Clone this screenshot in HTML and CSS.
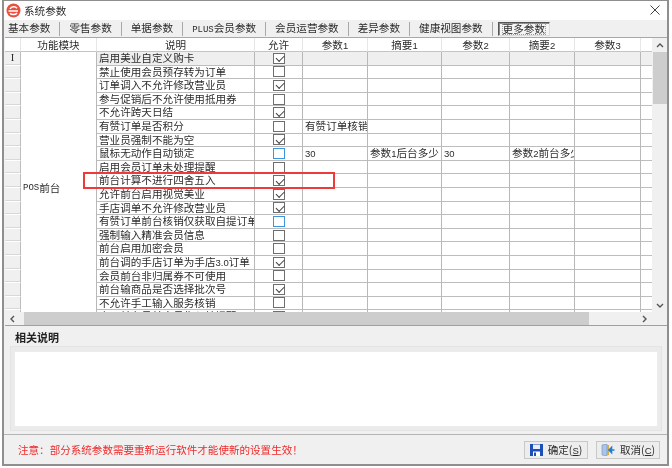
FILE: index.html
```html
<!DOCTYPE html>
<html lang="zh-CN">
<head>
<meta charset="utf-8">
<title>系统参数</title>
<link rel="stylesheet" href="styles.css">
</head>
<body>
<div class="window">
  <header class="titlebar">
    <svg class="app-icon" width="15" height="15" viewBox="0 0 15 15"><circle cx="7.5" cy="7.5" r="7" fill="#e8503f"/><path d="M2.5 8h9.5M11 5.2C9.3 3.2 5.4 3.3 4 5.8M4 10.2C5.5 12.2 9.5 12 11 10" fill="none" stroke="#fff" stroke-width="1.5"/></svg>
    <span class="title">系统参数</span>
    <svg class="close" width="10" height="10" viewBox="0 0 10 10"><path d="M.5.5l9 9M9.5.5l-9 9" stroke="#444" stroke-width="1" fill="none"/></svg>
  </header>
  <nav class="tabs">
    <span class="tab">基本参数</span>
    <span class="tab">零售参数</span>
    <span class="tab">单据参数</span>
    <span class="tab"><span class="n">PLUS</span>会员参数</span>
    <span class="tab">会员运营参数</span>
    <span class="tab">差异参数</span>
    <span class="tab">健康视图参数</span>
    <span class="tab active"><span class="focus">更多参数</span></span>
  </nav>
  <section class="grid-wrap">
    <div class="grid-main">
      <div class="grid">
        <div class="h"></div><div class="h">功能模块</div><div class="h">说明</div><div class="h">允许</div><div class="h">参数<span class="d">1</span></div><div class="h">摘要<span class="d">1</span></div><div class="h">参数<span class="d">2</span></div><div class="h">摘要<span class="d">2</span></div><div class="h">参数<span class="d">3</span></div><div class="h"></div>

        <div class="rh cur">I</div><div class="module"><span class="n">POS</span>前台</div><div class="c sel">启用美业自定义购卡</div><div class="c sel mid"><i class="cb on"></i></div><div class="c sel"></div><div class="c sel"></div><div class="c sel"></div><div class="c sel"></div><div class="c sel"></div><div class="c sel"></div>
        <div class="rh"></div><div class="c">禁止使用会员预存转为订单</div><div class="c mid"><i class="cb"></i></div><div class="c"></div><div class="c"></div><div class="c"></div><div class="c"></div><div class="c"></div><div class="c"></div>
        <div class="rh"></div><div class="c">订单调入不允许修改营业员</div><div class="c mid"><i class="cb on"></i></div><div class="c"></div><div class="c"></div><div class="c"></div><div class="c"></div><div class="c"></div><div class="c"></div>
        <div class="rh"></div><div class="c">参与促销后不允许使用抵用券</div><div class="c mid"><i class="cb"></i></div><div class="c"></div><div class="c"></div><div class="c"></div><div class="c"></div><div class="c"></div><div class="c"></div>
        <div class="rh"></div><div class="c">不允许跨天日结</div><div class="c mid"><i class="cb on"></i></div><div class="c"></div><div class="c"></div><div class="c"></div><div class="c"></div><div class="c"></div><div class="c"></div>
        <div class="rh"></div><div class="c">有赞订单是否积分</div><div class="c mid"><i class="cb"></i></div><div class="c clip">有赞订单核销</div><div class="c"></div><div class="c"></div><div class="c"></div><div class="c"></div><div class="c"></div>
        <div class="rh"></div><div class="c">营业员强制不能为空</div><div class="c mid"><i class="cb on"></i></div><div class="c"></div><div class="c"></div><div class="c"></div><div class="c"></div><div class="c"></div><div class="c"></div>
        <div class="rh"></div><div class="c">鼠标无动作自动锁定</div><div class="c mid"><i class="cb blue"></i></div><div class="c"><span class="d">30</span></div><div class="c clip">参数<span class="d">1</span>后台多少</div><div class="c"><span class="d">30</span></div><div class="c clip">参数<span class="d">2</span>前台多少</div><div class="c"></div><div class="c"></div>
        <div class="rh"></div><div class="c">启用会员订单未处理提醒</div><div class="c mid"><i class="cb"></i></div><div class="c"></div><div class="c"></div><div class="c"></div><div class="c"></div><div class="c"></div><div class="c"></div>
        <div class="rh"></div><div class="c">前台计算不进行四舍五入</div><div class="c mid"><i class="cb on"></i></div><div class="c"></div><div class="c"></div><div class="c"></div><div class="c"></div><div class="c"></div><div class="c"></div>
        <div class="rh"></div><div class="c">允许前台启用视觉美业</div><div class="c mid"><i class="cb on"></i></div><div class="c"></div><div class="c"></div><div class="c"></div><div class="c"></div><div class="c"></div><div class="c"></div>
        <div class="rh"></div><div class="c">手店调单不允许修改营业员</div><div class="c mid"><i class="cb on"></i></div><div class="c"></div><div class="c"></div><div class="c"></div><div class="c"></div><div class="c"></div><div class="c"></div>
        <div class="rh"></div><div class="c clip">有赞订单前台核销仅获取自提订单</div><div class="c mid"><i class="cb blue"></i></div><div class="c"></div><div class="c"></div><div class="c"></div><div class="c"></div><div class="c"></div><div class="c"></div>
        <div class="rh"></div><div class="c">强制输入精准会员信息</div><div class="c mid"><i class="cb"></i></div><div class="c"></div><div class="c"></div><div class="c"></div><div class="c"></div><div class="c"></div><div class="c"></div>
        <div class="rh"></div><div class="c">前台启用加密会员</div><div class="c mid"><i class="cb"></i></div><div class="c"></div><div class="c"></div><div class="c"></div><div class="c"></div><div class="c"></div><div class="c"></div>
        <div class="rh"></div><div class="c">前台调的手店订单为手店<span class="d">3.0</span>订单</div><div class="c mid"><i class="cb on"></i></div><div class="c"></div><div class="c"></div><div class="c"></div><div class="c"></div><div class="c"></div><div class="c"></div>
        <div class="rh"></div><div class="c">会员前台非归属券不可使用</div><div class="c mid"><i class="cb"></i></div><div class="c"></div><div class="c"></div><div class="c"></div><div class="c"></div><div class="c"></div><div class="c"></div>
        <div class="rh"></div><div class="c">前台输商品是否选择批次号</div><div class="c mid"><i class="cb on"></i></div><div class="c"></div><div class="c"></div><div class="c"></div><div class="c"></div><div class="c"></div><div class="c"></div>
        <div class="rh"></div><div class="c">不允许手工输入服务核销</div><div class="c mid"><i class="cb"></i></div><div class="c"></div><div class="c"></div><div class="c"></div><div class="c"></div><div class="c"></div><div class="c"></div>
        <div class="rh"></div><div class="c">启用前台员关会员生入结提醒</div><div class="c mid"><i class="cb"></i></div><div class="c"></div><div class="c"></div><div class="c"></div><div class="c"></div><div class="c"></div><div class="c"></div>
      </div>
      <div class="vscroll">
        <svg class="arrow" width="8" height="5" viewBox="0 0 8 5"><path d="M1 4l3-3 3 3" fill="none" stroke="#555" stroke-width="1.4"/></svg>
        <div class="vthumb"></div>
        <svg class="arrow down" width="8" height="5" viewBox="0 0 8 5"><path d="M1 1l3 3 3-3" fill="none" stroke="#555" stroke-width="1.4"/></svg>
      </div>
    </div>
    <div class="hscroll">
      <svg class="arrow" width="5" height="8" viewBox="0 0 5 8"><path d="M4 1L1 4l3 3" fill="none" stroke="#555" stroke-width="1.4"/></svg>
      <div class="hthumb"></div>
      <svg class="arrow" width="5" height="8" viewBox="0 0 5 8"><path d="M1 1l3 3-3 3" fill="none" stroke="#555" stroke-width="1.4"/></svg>
    </div>
    <div class="marker"></div>
  </section>
  <section class="notes">
    <h2 class="notes-title">相关说明</h2>
    <div class="notes-box"></div>
  </section>
  <footer class="footer">
    <p class="warn">注意：部分系统参数需要重新运行软件才能使新的设置生效！</p>
    <button class="btn" type="button">
      <svg width="13" height="12" viewBox="0 0 13 12"><rect width="13" height="12" fill="#1c4fb8"/><rect x="3" y="0.5" width="7" height="4.5" fill="#e8eefa"/><rect x="3" y="7.5" width="7" height="4.5" fill="#fff"/><rect x="4" y="8.5" width="2" height="3.5" fill="#1c4fb8"/></svg>
      <span>确定(<u class="d">S</u>)</span>
    </button>
    <button class="btn" type="button">
      <svg width="14" height="12" viewBox="0 0 14 12"><path d="M1 1l5-1v12l-5-1z" fill="#a9c6ea" stroke="#6f8fb8" stroke-width=".6"/><path d="M6 1h2v10H6z" fill="#e0a93f"/><path d="M13.5 6H10M10.5 3.5L8 6l2.5 2.5z" fill="#1f7fd6" stroke="#1f7fd6" stroke-width="1.6"/></svg>
      <span>取消(<u class="d">C</u>)</span>
    </button>
  </footer>
</div>
</body>
</html>
```
FILE: styles.css
```css
* { box-sizing: border-box; }
html, body { margin: 0; padding: 0; }
body {
  width: 672px;
  height: 468px;
  background: #fff;
  overflow: hidden;
  padding: 0 3px 2px 2px;
  font-family: "Noto Sans CJK SC", "Liberation Sans", sans-serif;
  font-size: 10.6px;
  color: #2c2c2c;
}
.n { font-family: "Liberation Mono", monospace; font-size: 9px; }
.d { font-family: "Liberation Sans", sans-serif; font-size: 9.5px; }
.window {
  height: 466px;
  display: flex;
  flex-direction: column;
  background: #f0f0f0;
  border: 1.5px solid #8f8f8f;
  border-width: 1px 2px 2px 2px;
  position: relative;
  filter: blur(0.3px);
}
.titlebar {
  height: 19px;
  flex: none;
  background: #fff;
  display: flex;
  align-items: center;
  padding: 0 7px 1px 2px;
}
.title { margin-left: 3px; flex: 1; }
.tabs {
  height: 17px;
  flex: none;
  display: flex;
  align-items: center;
  background: #f0f0f0;
}
.tab {
  height: 14px;
  line-height: 12px;
  padding: 0 9px;
  border-right: 1px solid #a8a8a8;
  white-space: nowrap;
}
.tab:first-child { padding-left: 4px; }
.tab.active {
  border: 1px solid;
  border-color: #555 #ddd #ddd #555;
  background: #f4f4f4;
  margin-left: 5px;
  padding: 0 3px;
  box-shadow: inset 1px 1px 0 #888;
}
.focus { display: block; outline: 1px dotted #999; outline-offset: -1px; padding: 0 1px; }
.grid-wrap {
  flex: none;
  height: 289px;
  margin-left: 1px;
  border-top: 1px solid #a8a8a8;
  border-bottom: 1px solid #a0a0a0;
  display: flex;
  flex-direction: column;
  position: relative;
}
.grid-main { display: flex; height: 274px; flex: none; }
.grid {
  width: 648px;
  height: 274px;
  overflow: hidden;
  background: #fff;
  display: grid;
  grid-template-columns: 16px 76px 158px 48px 65px 74px 68px 65px 66px 12px;
  grid-template-rows: 14px repeat(20, 13.6px);
  line-height: 12.6px;
}
.h {
  background: #fff;
  border-right: 1px solid #e6e6e6;
  border-bottom: 1px solid #c4c4c4;
  text-align: center;
  line-height: 13px;
  white-space: nowrap;
}
.rh {
  background: #f0f0f0;
  border-right: 1px solid #bdbdbd;
  border-bottom: 1px solid #fff;
  box-shadow: inset 0 -1px 0 #d8d8d8;
  text-align: center;
}
.cur { font-family: "Liberation Serif", serif; }
.module {
  grid-column: 2;
  grid-row: 2 / span 20;
  background: #fff;
  border-right: 1px solid #b8b8b8;
  display: flex;
  align-items: center;
  padding-left: 2px;
  height: 272px;
  white-space: nowrap;
}
.c {
  border-right: 1px solid #b8b8b8;
  border-bottom: 1px solid #bdbdbd;
  padding-left: 2px;
  white-space: nowrap;
  background: #fff;
}
.clip { overflow: hidden; }
.sel { background: #efefef; }
.mid { display: flex; align-items: center; justify-content: center; padding: 0; }
.cb {
  width: 12px;
  height: 11px;
  border: 1px solid #6e6e6e;
  background: #fff;
  position: relative;
  display: block;
}
.cb.blue { border-color: #3d95e0; }
.cb.on::after {
  content: "";
  position: absolute;
  left: 2px;
  top: 1.5px;
  width: 7px;
  height: 3.5px;
  border-left: 1.2px solid #444;
  border-bottom: 1.2px solid #444;
  transform: rotate(-45deg);
}
.vscroll {
  width: 14px;
  margin-left: 1px;
  background: #f0f0f0;
  display: flex;
  flex-direction: column;
  align-items: center;
}
.vthumb { width: 14px; height: 52px; background: #cdcdcd; }
.arrow { flex: none; }
.vscroll .arrow:first-child { margin: 5px 0 4px; }
.arrow.down { margin-top: auto; margin-bottom: 4px; }
.hscroll {
  height: 13px;
  flex: none;
  background: #f0f0f0;
  display: flex;
  align-items: center;
  padding: 0 20px 0 5px;
}
.hthumb { width: 570px; height: 13px; background: #cdcdcd; margin: 0 53px 0 9px; }
.marker {
  position: absolute;
  left: 78px;
  top: 134px;
  width: 252px;
  height: 17px;
  border: 2px solid #ef3a3a;
}
.notes { flex: none; height: 109px; padding: 4px 6px 0 7px; border-bottom: 1px solid #b4b4b4; }
.notes-title { margin: 0 0 3px; font-size: 11px; line-height: 14px; font-weight: 700; color: #222; padding-left: 4px; }
.notes-box {
  height: 83px;
  background: #fff;
  border: 4px solid #ebebeb;
  border-width: 5px 4px 4px 4px;
  outline: 1px solid #e4e4e4;
}
.footer {
  flex: 1;
  display: flex;
  align-items: center;
  padding: 0 7px 0 14px;
  gap: 8px;
}
.warn { margin: 0 auto 0 0; color: #f02a2a; font-size: 10.55px; }
.btn {
  width: 64px;
  height: 18px;
  padding: 0;
  border: 1px solid #c8c8c8;
  background: #ededed;
  font: inherit;
  color: #2c2c2c;
  display: flex;
  align-items: center;
  justify-content: center;
  gap: 5px;
}
```
